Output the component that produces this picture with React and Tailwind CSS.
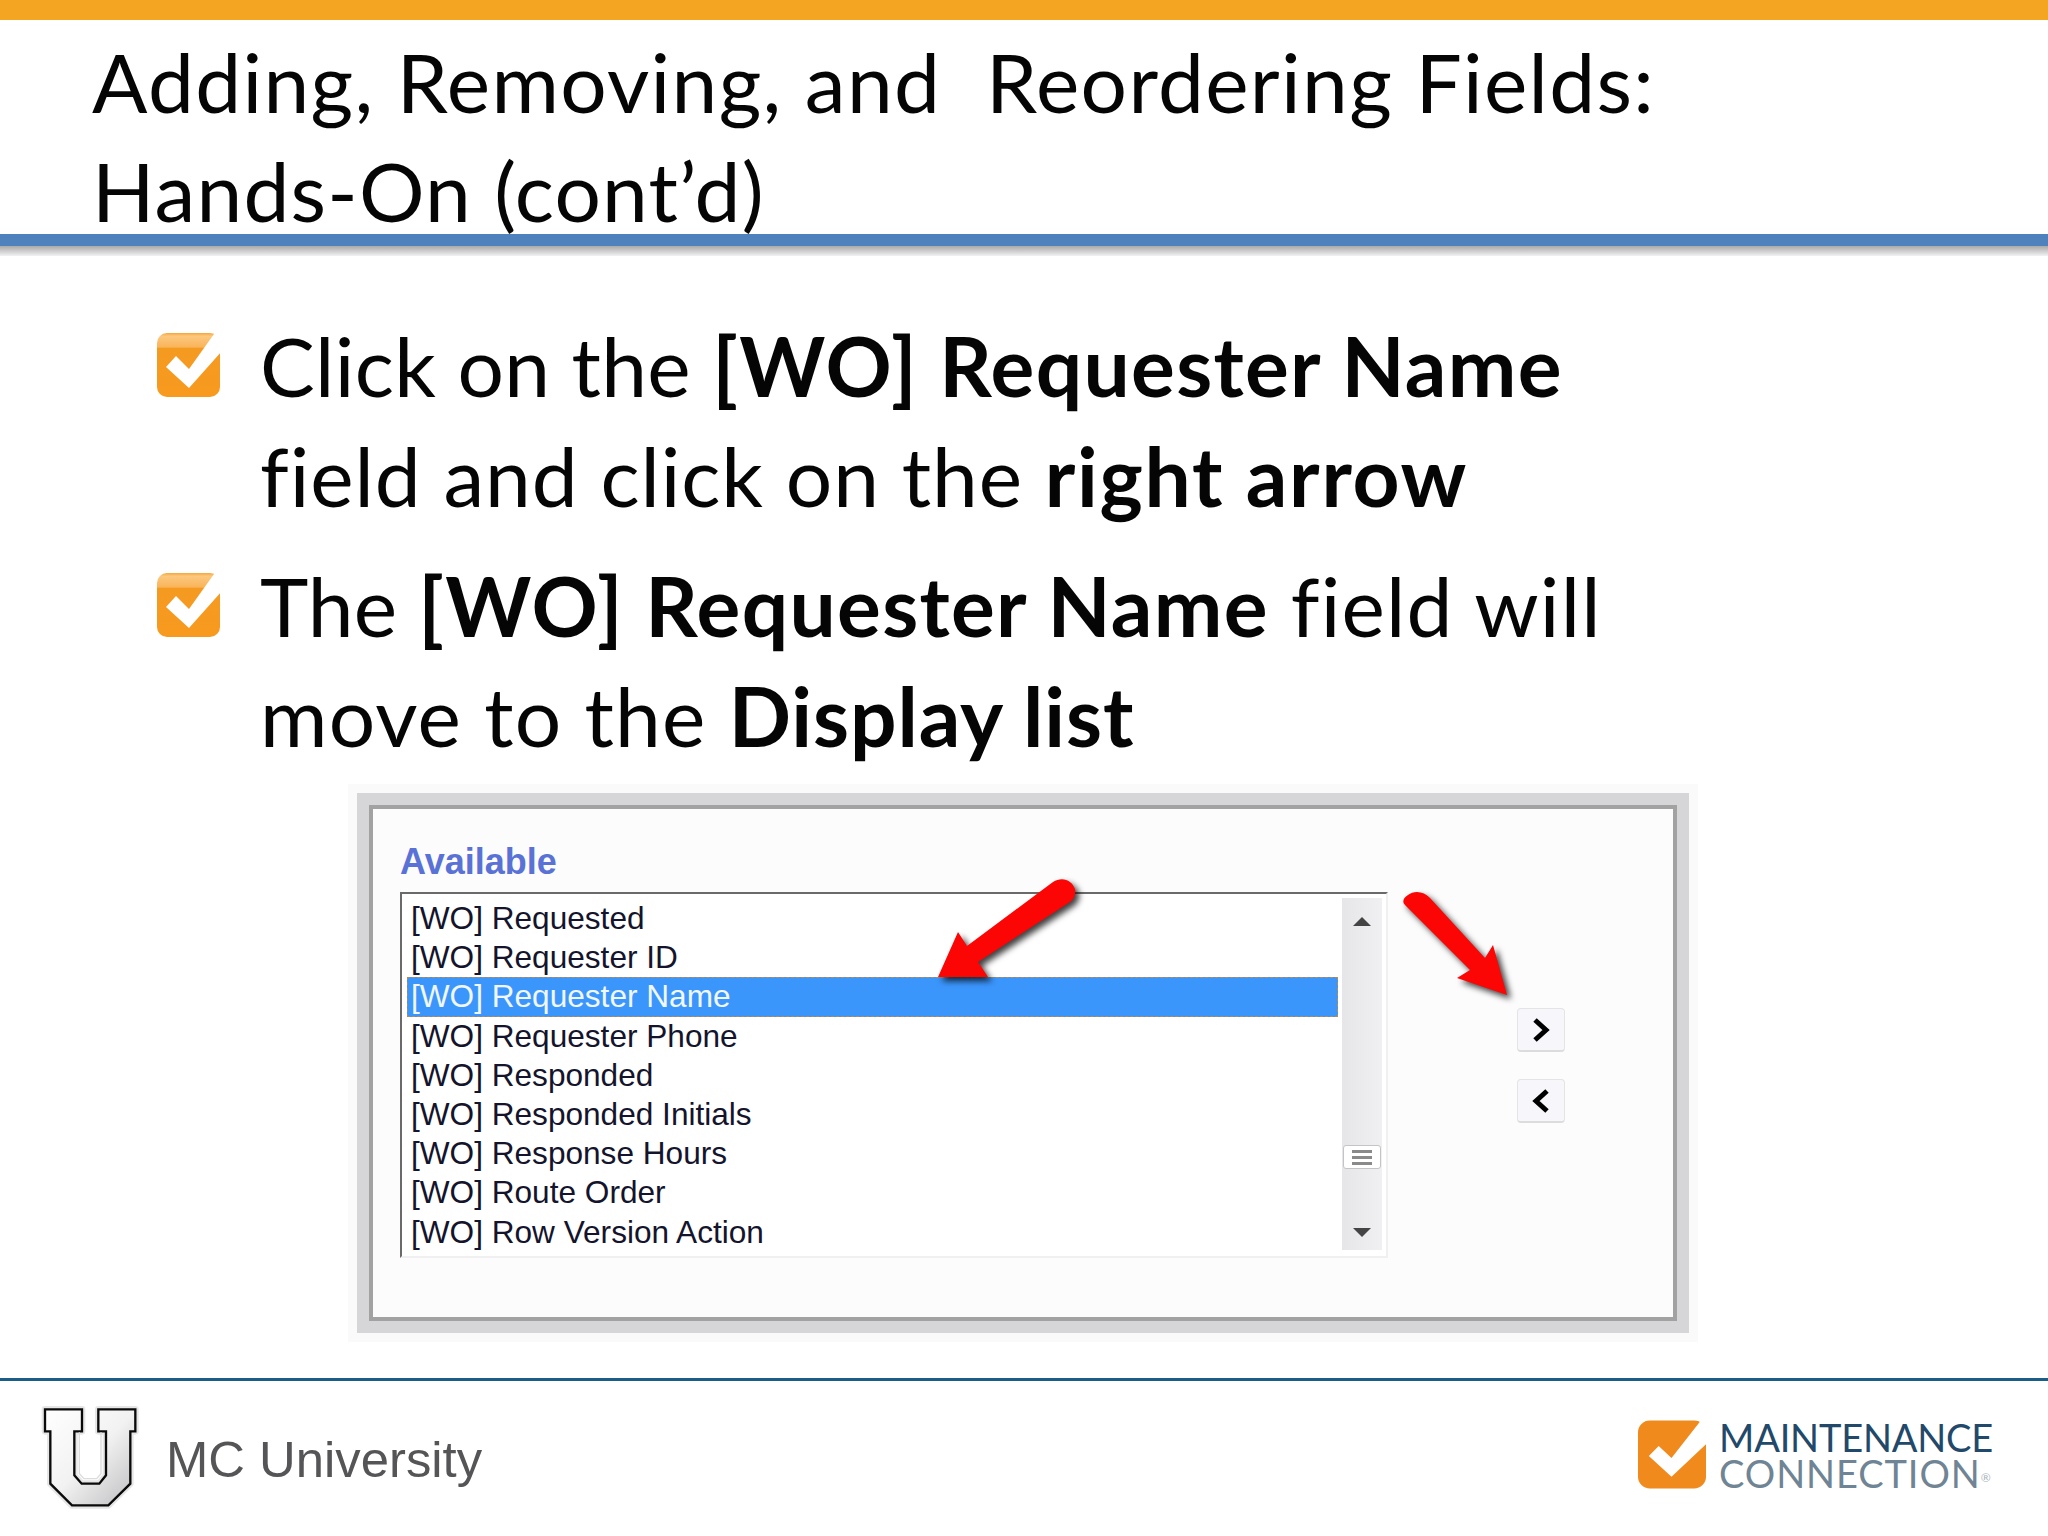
import React from "react";

const lato = { fontFamily: "Lato, 'Noto Sans', sans-serif" };

function Check({ id }) {
  return (
    <svg width="63" height="64" viewBox="0 0 63 64" className="shrink-0">
      <defs>
        <linearGradient id={id} x1="0" y1="0" x2="0" y2="1">
          <stop offset="0" stopColor="#f6a63c" />
          <stop offset="0.05" stopColor="#fcc87e" />
          <stop offset="0.22" stopColor="#f9b45a" />
          <stop offset="0.24" stopColor="#f59a21" />
          <stop offset="1" stopColor="#f79a1e" />
        </linearGradient>
      </defs>
      <rect x="0" y="0" width="63" height="64" rx="10" fill={`url(#${id})`} />
      <polygon points="9,34 19,23 32,36 57,1 64,0 64,19 32,55" fill="#fff" />
    </svg>
  );
}

function Arrow({ className, d, box }) {
  return (
    <svg viewBox={box} className={className} fill="#fb0505" style={{ filter: "drop-shadow(4px 4px 3px rgba(0,0,0,0.75))" }}>
      <path d={d} />
    </svg>
  );
}

function Tri({ down }) {
  return (
    <svg width="20" height="12" viewBox="0 0 20 12">
      <polygon points={down ? "1,2 19,2 10,11" : "1,10 19,10 10,1"} fill="#444" />
    </svg>
  );
}

const rows = [
  "[WO] Requested",
  "[WO] Requester ID",
  "[WO] Requester Name",
  "[WO] Requester Phone",
  "[WO] Responded",
  "[WO] Responded Initials",
  "[WO] Response Hours",
  "[WO] Route Order",
  "[WO] Row Version Action",
];

function MoveButton({ dir, className }) {
  return (
    <div className={`w-12 h-11 rounded-sm bg-[#f6f6fb] border border-[#e4e4e4] border-b-2 border-b-[#dcdcdc] flex items-center justify-center ${className}`}>
      <svg width="18" height="24" viewBox="0 0 18 24" fill="none" stroke="#000" strokeWidth="5">
        <path d={dir === "right" ? "M3 2 L14 12 L3 22" : "M15 2 L4 12 L15 22"} />
      </svg>
    </div>
  );
}

export default function App() {
  return (
    <div className="relative w-[2048px] h-[1536px] bg-white overflow-hidden flex flex-col text-[#050505]">
      <div className="h-5 bg-[#f4a521] shrink-0" />
      <div className="relative z-10 h-[214px] shrink-0 pl-[92px] pt-[7px] text-[82px] leading-[109px] tracking-[1.33px] whitespace-pre" style={lato}>
        <div>Adding, Removing, and  Reordering Fields:</div>
        <div className="tracking-[1.2px]">Hands-On (cont’d)</div>
      </div>
      <div className="h-3 bg-[#4f81bd] shrink-0" />
      <div className="h-[10px] shrink-0 bg-gradient-to-b from-[#a9a9a9] to-[#f2f2f2]" />

      <div className="shrink-0 pl-[157px] pt-[54px] flex flex-col gap-5 text-[82px] leading-[110px] tracking-[0.9px]" style={lato}>
        <div className="flex">
          <div className="w-[103px] shrink-0 pt-[23px]"><Check id="c1" /></div>
          <div>
            <div><span className="tracking-[0.3px]">Click on the </span><b className="tracking-[1.3px]">[WO] Requester Name</b></div>
            <div>field and click on the <b className="tracking-[1.7px]">right arrow</b></div>
          </div>
        </div>
        <div className="flex">
          <div className="w-[103px] shrink-0 pt-[23px]"><Check id="c2" /></div>
          <div>
            <div><span className="tracking-[0.1px]">The </span><b className="tracking-[1.3px]">[WO] Requester Name</b> <span className="tracking-[1.2px]">field will</span></div>
            <div><span className="tracking-[1.2px]">move to the </span><b>Display list</b></div>
          </div>
        </div>
      </div>

      <div className="relative flex shrink-0 ml-[373px] mt-[39px] w-[1300px] h-[508px] bg-[#fcfcfd] shadow-[0_0_0_4px_#a2a2a2,0_0_0_16px_#d6d6d8,0_0_0_25px_#fafafa] pl-[27px] pt-[35px]" style={{ fontFamily: "'Liberation Sans', Arial, sans-serif" }}>
        <div className="w-[988px] shrink-0">
          <div className="text-[36px] leading-[36px] font-bold text-[#5a72d6]">Available</div>
          <div className="mt-[12px] w-[988px] h-[366px] bg-white border-t-2 border-l-2 border-t-[#6a6a6a] border-l-[#6a6a6a] border-b-2 border-r-2 border-b-[#f0f0f0] border-r-[#f0f0f0] pl-[5px] pt-1 flex items-start">
            <div className="w-[931px] pt-px text-[31.6px] leading-[39.2px] text-[#14142c] whitespace-nowrap">
              {rows.map((r, i) => (
                <div key={r} className={i === 2 ? "h-[39.2px] pl-[3px] bg-[#3b96fc] text-[#f2f7ff] border border-dashed border-[#b98a50] leading-[37px]" : "h-[39.2px] pl-1"}>{r}</div>
              ))}
            </div>
            <div className="ml-1 w-10 h-[352px] bg-gradient-to-r from-[#e6e6e8] to-[#f0f0f2] flex flex-col items-center pt-[18px]">
              <Tri />
              <div className="mt-[217px] w-[38px] h-[24px] bg-white border border-[#c4c4c4] rounded-[3px] flex flex-col items-center justify-center gap-[3px]">
                <div className="w-[20px] h-[3px] bg-[#8a8a8a]" />
                <div className="w-[20px] h-[3px] bg-[#8a8a8a]" />
                <div className="w-[20px] h-[3px] bg-[#8a8a8a]" />
              </div>
              <div className="mt-[57px]"><Tri down /></div>
            </div>
          </div>
        </div>
        <div className="ml-[129px] pt-[164px] flex flex-col gap-[27px]">
          <MoveButton dir="right" />
          <MoveButton dir="left" />
        </div>
        <Arrow box="0 0 180 140" className="absolute left-[547px] top-[51px] w-[180px] h-[140px]" d="M18 117 L38 72 L47 86 L133 22 C142 16 152 20 155 29 C156 35 154 39 150 42 L58 102 L68 117 Z" />
        <Arrow box="0 0 140 140" className="absolute left-[1017px] top-[71px] w-[140px] h-[140px]" d="M15 25 L80 90 L67 98 L117 115 L103 65 L95 78 L40 18 C34 11 24 10 18 15 C13 18 12 22 15 25 Z" />
      </div>

      <div className="mt-[61px] h-[3px] bg-[#1c5d87] shrink-0" />

      <div className="flex-1 flex items-start justify-between pl-[41px] pr-[55px]">
        <div className="flex items-start">
          <svg width="100" height="110" viewBox="125 125 300 330" className="mt-[21px]">
            <defs>
              <linearGradient id="ug" x1="0" y1="0" x2="1" y2="1">
                <stop offset="0" stopColor="#ffffff" />
                <stop offset="0.5" stopColor="#f2f2f2" />
                <stop offset="1" stopColor="#bdbdc0" />
              </linearGradient>
            </defs>
            <polygon points="137,147 248,147 248,213 225,213 225,345 247,370 300,370 320,345 320,213 297,213 297,147 408,147 408,213 393,213 393,370 327,435 218,435 153,370 153,213 137,213" fill="url(#ug)" stroke="#e6e6e6" strokeWidth="20" strokeLinejoin="round" />
            <polygon points="137,147 248,147 248,213 225,213 225,345 247,370 300,370 320,345 320,213 297,213 297,147 408,147 408,213 393,213 393,370 327,435 218,435 153,370 153,213 137,213" fill="url(#ug)" stroke="#0a0a0a" strokeWidth="7" />
            <polyline points="240,216 240,340 254,355 292,355 305,340 305,216" fill="none" stroke="#dcdcdc" strokeWidth="4" />
          </svg>
          <div className="ml-[25px] mt-[50px] text-[50.8px] leading-[58px] text-[#555557]" style={{ fontFamily: "'Liberation Sans', Arial, sans-serif" }}>MC University</div>
        </div>
        <div className="flex items-start mt-[38px]">
          <svg width="68" height="69" viewBox="0 0 69 69" className="shrink-0 mt-px">
            <rect width="69" height="69" rx="12" fill="#f18a1c" />
            <polygon points="11,36 21,26 34,38 63,1 69,0 69,24 34,57" fill="#fff" />
          </svg>
          <div className="ml-[13px] whitespace-nowrap" style={lato}>
            <div className="text-[38px] leading-[37px] text-[#22496a] tracking-[-0.2px]">MAINTENANCE</div>
            <div className="text-[38px] leading-[35px] text-[#6f8494] tracking-[0.9px]">CONNECTION<sup className="text-[12px] text-[#aab4bc] tracking-normal">®</sup></div>
          </div>
        </div>
      </div>
    </div>
  );
}
